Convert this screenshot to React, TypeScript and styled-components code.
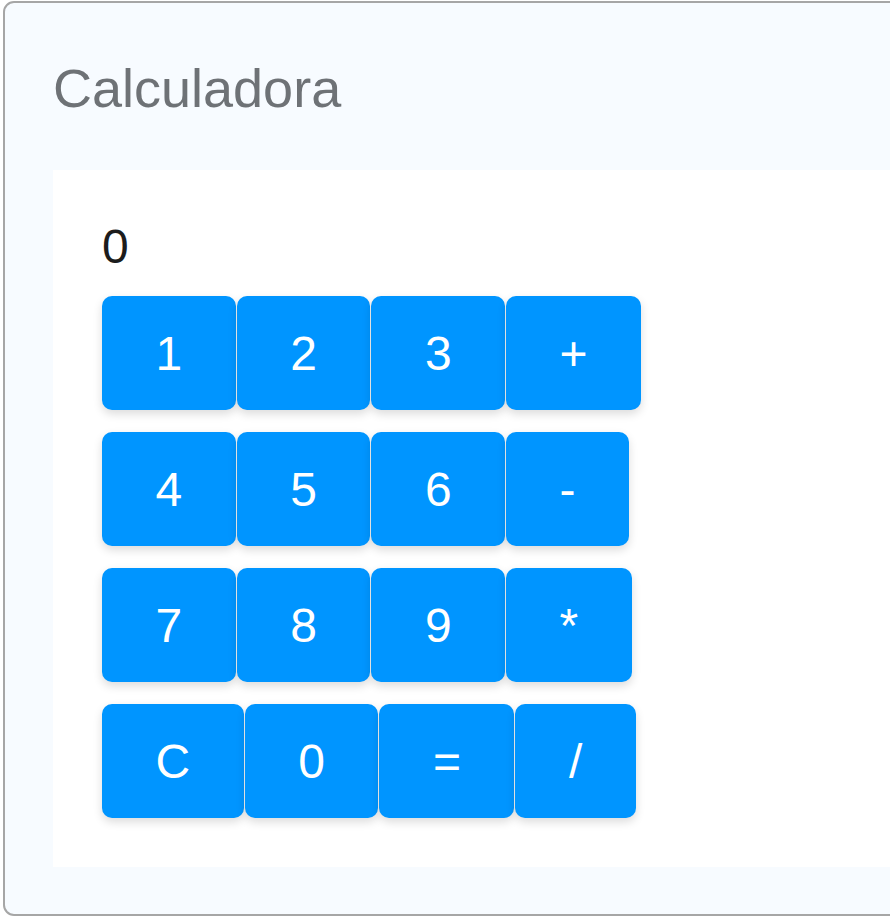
import React, { useState } from "react";
import styled, { createGlobalStyle } from "styled-components";

const GlobalStyle = createGlobalStyle`
  html, body {
    margin: 0;
    padding: 0;
    background: #ffffff;
    overflow: hidden;
  }
  body {
    font-family: "Liberation Sans", Arial, sans-serif;
  }
`;

const Page = styled.div`
  padding: 1px 0 0 3px;
  width: 1300px;
`;

const Card = styled.section`
  background: #f7fbff;
  border: 2px solid #a6a6a6;
  border-radius: 11px;
  padding: 48px 48px 47px;
  height: 915px;
  box-sizing: border-box;
  display: flex;
  flex-direction: column;
`;

const Title = styled.h1`
  margin: 7px 0 51px;
  font-size: 54px;
  font-weight: 400;
  line-height: 61px;
  color: #6e7276;
`;

const Panel = styled.div`
  flex: 1;
  background: #ffffff;
  padding: 49px 49px 48px;
  display: flex;
  flex-direction: column;
  gap: 22px;
`;

const Display = styled.div`
  font-size: 48px;
  line-height: 55px;
  color: #1c1c1c;
`;

const Row = styled.div`
  display: flex;
  gap: 1px;
`;

const Key = styled.button`
  font-family: "Liberation Sans", Arial, sans-serif;
  font-size: 48px;
  line-height: 55px;
  padding: 29.5px 53.5px;
  border: none;
  border-radius: 10px;
  background: #0095ff;
  color: #ffffff;
  box-shadow: 0 4px 10px rgba(0, 0, 0, 0.14);
  cursor: pointer;
`;

const rows = [
  ["1", "2", "3", "+"],
  ["4", "5", "6", "-"],
  ["7", "8", "9", "*"],
  ["C", "0", "=", "/"],
];

export default function App() {
  const [value, setValue] = useState("0");

  const press = (k: string) => {
    if (k === "C") {
      setValue("0");
      return;
    }
    if (k === "=") {
      try {
        // eslint-disable-next-line no-new-func
        const r = Function(`return (${value})`)();
        setValue(String(r));
      } catch {
        setValue("0");
      }
      return;
    }
    setValue((v) => (v === "0" ? k : v + k));
  };

  return (
    <>
      <GlobalStyle />
      <Page>
        <Card>
          <Title>Calculadora</Title>
          <Panel>
            <Display>{value}</Display>
            {rows.map((r, i) => (
              <Row key={i}>
                {r.map((k) => (
                  <Key key={k} onClick={() => press(k)}>
                    {k}
                  </Key>
                ))}
              </Row>
            ))}
          </Panel>
        </Card>
      </Page>
    </>
  );
}
